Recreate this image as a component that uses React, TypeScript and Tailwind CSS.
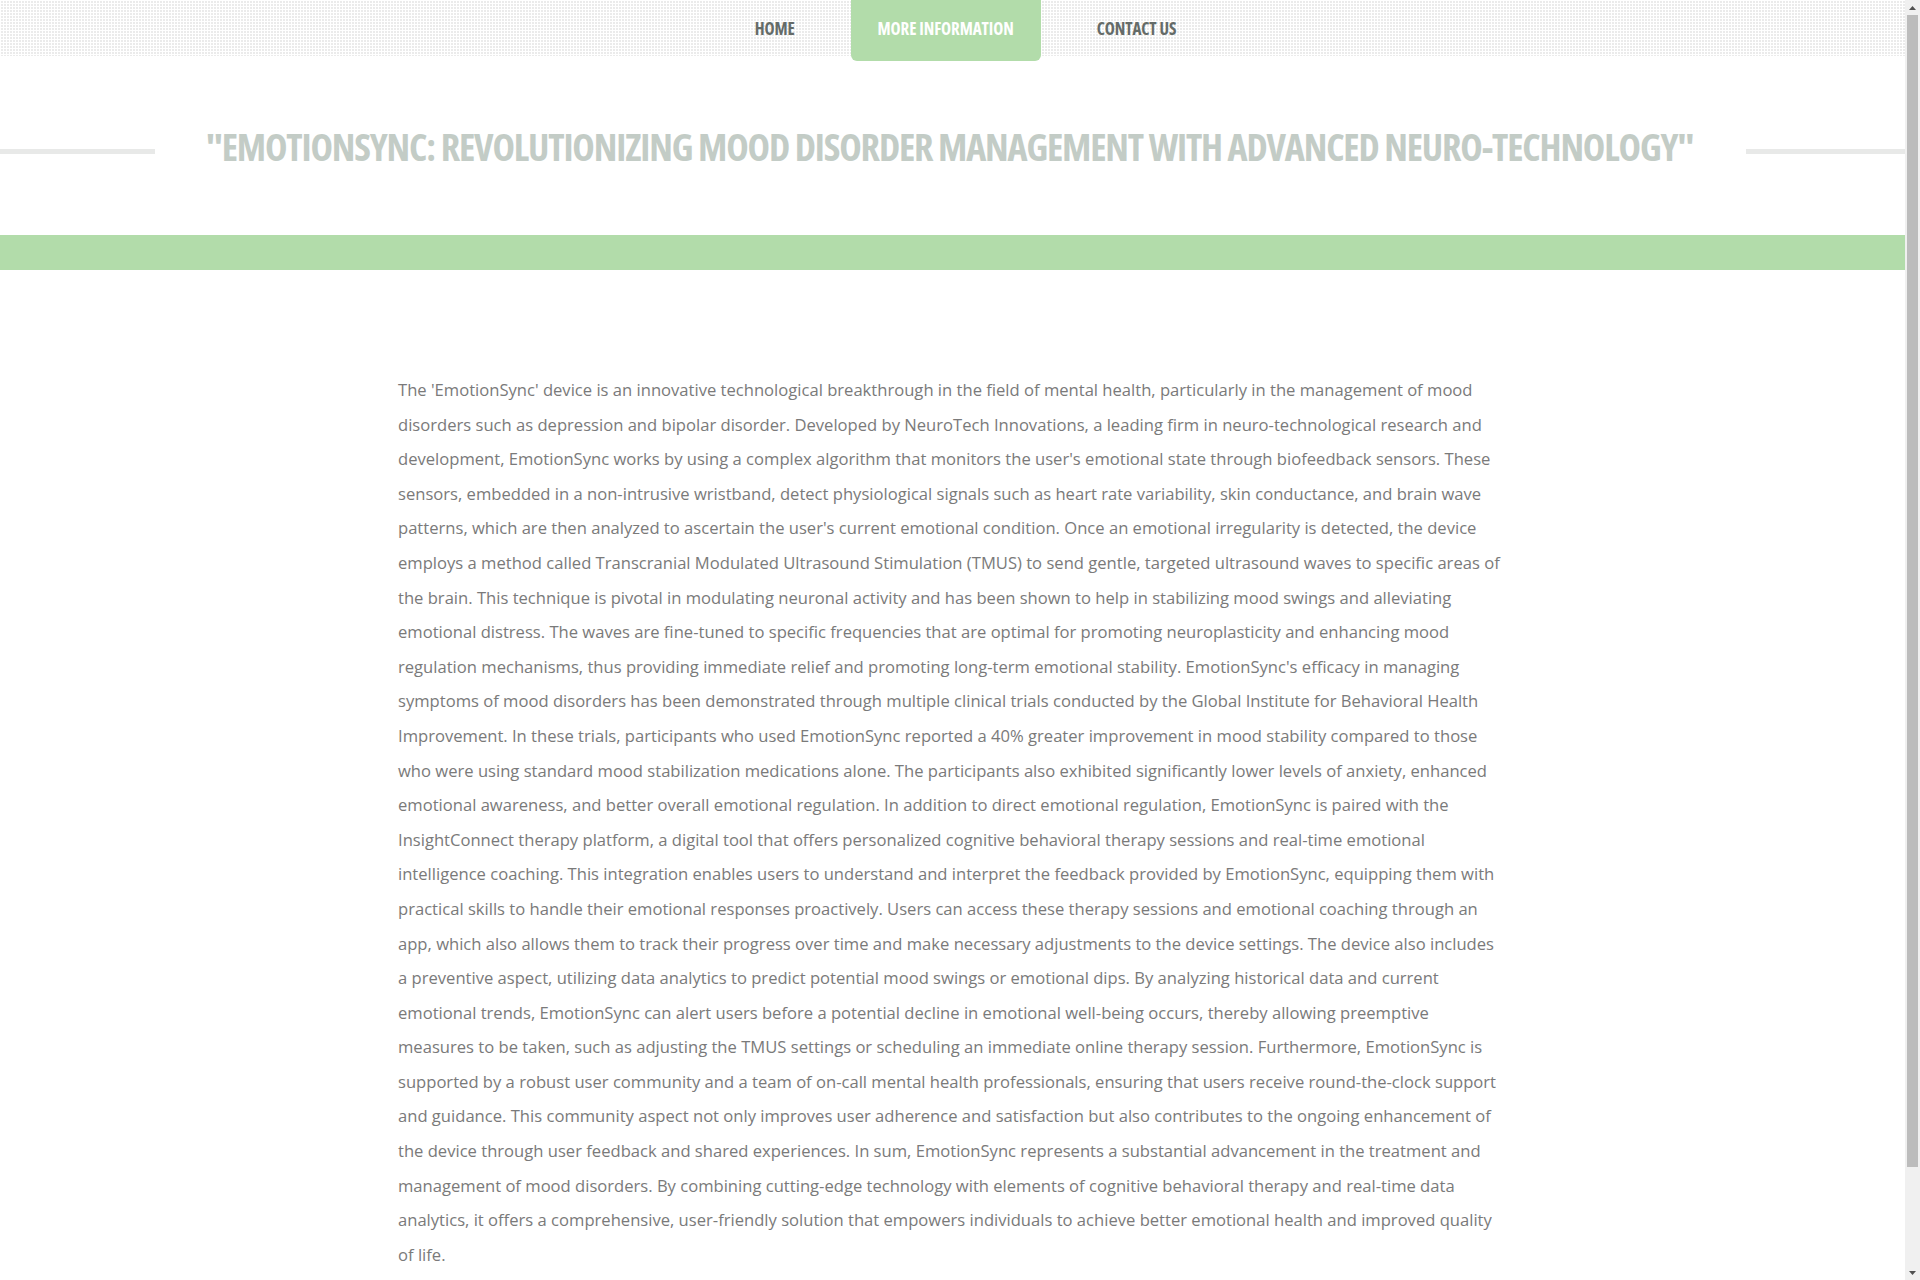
const body =
  "The 'EmotionSync' device is an innovative technological breakthrough in the field of mental health, particularly in the management of mood disorders such as depression and bipolar disorder. Developed by NeuroTech Innovations, a leading firm in neuro-technological research and development, EmotionSync works by using a complex algorithm that monitors the user's emotional state through biofeedback sensors. These sensors, embedded in a non-intrusive wristband, detect physiological signals such as heart rate variability, skin conductance, and brain wave patterns, which are then analyzed to ascertain the user's current emotional condition. Once an emotional irregularity is detected, the device employs a method called Transcranial Modulated Ultrasound Stimulation (TMUS) to send gentle, targeted ultrasound waves to specific areas of the brain. This technique is pivotal in modulating neuronal activity and has been shown to help in stabilizing mood swings and alleviating emotional distress. The waves are fine-tuned to specific frequencies that are optimal for promoting neuroplasticity and enhancing mood regulation mechanisms, thus providing immediate relief and promoting long-term emotional stability. EmotionSync's efficacy in managing symptoms of mood disorders has been demonstrated through multiple clinical trials conducted by the Global Institute for Behavioral Health Improvement. In these trials, participants who used EmotionSync reported a 40% greater improvement in mood stability compared to those who were using standard mood stabilization medications alone. The participants also exhibited significantly lower levels of anxiety, enhanced emotional awareness, and better overall emotional regulation. In addition to direct emotional regulation, EmotionSync is paired with the InsightConnect therapy platform, a digital tool that offers personalized cognitive behavioral therapy sessions and real-time emotional intelligence coaching. This integration enables users to understand and interpret the feedback provided by EmotionSync, equipping them with practical skills to handle their emotional responses proactively. Users can access these therapy sessions and emotional coaching through an app, which also allows them to track their progress over time and make necessary adjustments to the device settings. The device also includes a preventive aspect, utilizing data analytics to predict potential mood swings or emotional dips. By analyzing historical data and current emotional trends, EmotionSync can alert users before a potential decline in emotional well-being occurs, thereby allowing preemptive measures to be taken, such as adjusting the TMUS settings or scheduling an immediate online therapy session. Furthermore, EmotionSync is supported by a robust user community and a team of on-call mental health professionals, ensuring that users receive round-the-clock support and guidance. This community aspect not only improves user adherence and satisfaction but also contributes to the ongoing enhancement of the device through user feedback and shared experiences. In sum, EmotionSync represents a substantial advancement in the treatment and management of mood disorders. By combining cutting-edge technology with elements of cognitive behavioral therapy and real-time data analytics, it offers a comprehensive, user-friendly solution that empowers individuals to achieve better emotional health and improved quality of life.";

const links = [
  { label: "HOME", active: false },
  { label: "MORE INFORMATION", active: true },
  { label: "CONTACT US", active: false },
];

// the screenshot shows the browser's scrollbar, drawn here as a plain column
function Scrollbar() {
  return (
    <aside className="flex w-[15px] shrink-0 flex-col bg-[#f0f0f0]">
      <div className="flex h-[15px] items-center justify-center">
        <svg width="7" height="4" viewBox="0 0 7 4">
          <path d="M0 4 L3.5 0 L7 4 Z" fill="#505050" />
        </svg>
      </div>
      <div className="mx-[2px] h-[1152px] bg-[#bcbcbc]" />
      <div className="flex-1" />
      <div className="flex h-[15px] items-center justify-center">
        <svg width="7" height="4" viewBox="0 0 7 4">
          <path d="M0 0 L7 0 L3.5 4 Z" fill="#505050" />
        </svg>
      </div>
    </aside>
  );
}

export default function App() {
  return (
    <div className="flex h-screen overflow-hidden bg-white font-['Open_Sans',sans-serif]">
      <div className="flex-1">
        <header className="h-[56px] bg-[#ebebeb] bg-[linear-gradient(to_right,white_1px,transparent_1px),linear-gradient(to_bottom,white_1px,transparent_1px)] bg-[size:3px_3px]">
          <ul className="flex justify-center gap-[29px] pl-[26px]">
            {links.map((l) => (
              <li key={l.label} className="flex">
                <a
                  href="#"
                  className={
                    l.active
                      ? "flex h-[61px] items-start rounded-b-[6px] bg-[#b2dcaa] px-[27px] pt-[16px] text-[17px] font-bold tracking-[-0.1px] text-white [font-stretch:75%]"
                      : "flex h-[56px] items-start px-[27px] pt-[16px] text-[17px] font-bold tracking-[-0.1px] text-[#646b68] [font-stretch:75%]"
                  }
                >
                  {l.label}
                </a>
              </li>
            ))}
          </ul>
        </header>

        <div className="mt-[71px] flex items-center">
          <div className="mt-[10px] h-[5px] w-[155px] bg-[#e8e9e8]" />
          <h1 className="ml-[51px] mr-[53px] whitespace-nowrap text-[38px] font-bold leading-[1] tracking-[-1.15px] text-[#c3ccc6] [font-stretch:75%]">
            "EMOTIONSYNC: REVOLUTIONIZING MOOD DISORDER MANAGEMENT WITH ADVANCED NEURO-TECHNOLOGY"
          </h1>
          <div className="mt-[10px] h-[5px] flex-1 bg-[#e8e9e8]" />
        </div>

        <div className="mt-[70px] h-[35px] bg-[#b2dcaa]" />

        <main className="mx-auto w-[1109px] pr-[5px] pt-[103px] pb-[40px]">
          <p className="text-[16.6px] leading-[34.6px] text-[#7a7a7a]">{body}</p>
        </main>
      </div>
      <Scrollbar />
    </div>
  );
}
